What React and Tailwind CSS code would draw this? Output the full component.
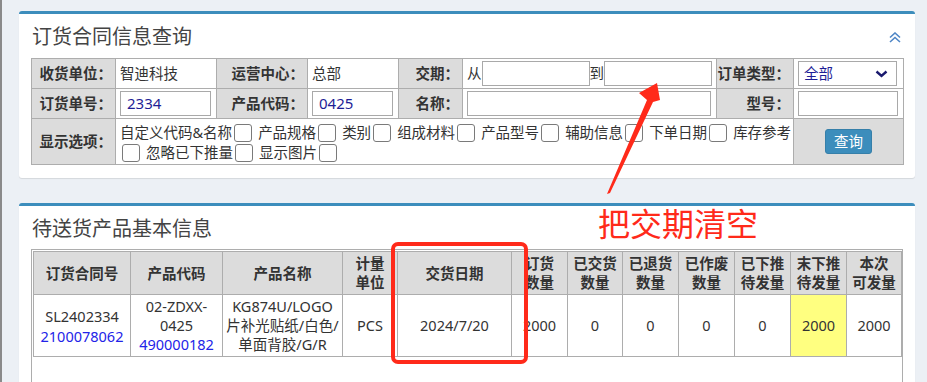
import React from "react";

const Cb = () => (
  <span className="inline-block w-[18px] h-[18px] border border-[#7a7a7a] rounded-[3px] bg-white align-[-4px] ml-[2px] mr-[6px]" />
);

const Label = ({ children, className = "" }) => (
  <td className={`bg-[#dcdcdc] border border-[#adadad] text-right pr-[3px] font-bold text-[#333] whitespace-nowrap ${className}`}>
    {children}
  </td>
);

const Val = ({ children, className = "", ...rest }) => (
  <td className={`border border-[#adadad] bg-white px-[4px] text-[#333] ${className}`} {...rest}>
    {children}
  </td>
);

const Input = ({ w, value }) => (
  <div
    className="h-[25px] border border-[#a9a9a9] bg-white px-[6px] leading-[23px] text-[#1e1e96] text-[15px]"
    style={{ width: w }}
  >
    {value}
  </div>
);

const H = ({ children, className = "" }) => (
  <th className={`border border-[#adadad] bg-[#dcdcdc] font-bold text-[#333] text-center leading-[19px] ${className}`}>
    {children}
  </th>
);

const D = ({ children, className = "" }) => (
  <td className={`border border-[#adadad] text-center text-[#333] leading-[19px] ${className}`}>
    {children}
  </td>
);

export default function App() {
  return (
    <div className="relative w-[927px] h-[382px] overflow-hidden bg-[#ecf0f5] border-l-2 border-[#8a8a8a] font-['Noto_Sans','Noto_Sans_CJK_SC',sans-serif] text-[14.5px]">
      <div className="pl-[17px] pt-[11px] w-[913px]">
        {/* Panel 1 */}
        <div className="w-[896px] bg-white border-t-[3px] border-[#3c8dbc] rounded-[3px] shadow-[0_1px_1px_rgba(0,0,0,0.1)] pb-[13px]">
          <div className="flex items-center justify-between pl-[13px] pr-[14px] pt-[11px] pb-[9px]">
            <div className="text-[20px] leading-[24px] text-[#444]">订货合同信息查询</div>
            <svg width="12" height="11" viewBox="0 0 12 11" fill="none" stroke="#4f86c6" strokeWidth="1.6">
              <polyline points="1,5.5 6,1 11,5.5" />
              <polyline points="1,10 6,5.5 11,10" />
            </svg>
          </div>
          <div className="px-3">
            <table className="w-[872px] table-fixed border-collapse border border-[#adadad]">
              <colgroup>
                <col className="w-[84px]" />
                <col className="w-[101px]" />
                <col className="w-[91px]" />
                <col className="w-[91px]" />
                <col className="w-[64px]" />
                <col className="w-[254px]" />
                <col className="w-[77px]" />
                <col className="w-[110px]" />
              </colgroup>
              <tbody>
                <tr className="h-[30px]">
                  <Label>收货单位：</Label>
                  <Val>智迪科技</Val>
                  <Label>运营中心：</Label>
                  <Val>总部</Val>
                  <Label>交期：</Label>
                  <Val>
                    <div className="flex items-center">
                      <span className="text-[#333]">从</span>
                      <Input w={108} value="" />
                      <span className="text-[#333]">到</span>
                      <Input w={108} value="" />
                    </div>
                  </Val>
                  <Label>订单类型：</Label>
                  <Val>
                    <div className="w-[99px] h-[25px] border border-[#a9a9a9] flex items-center justify-between pl-[5px] pr-[8px] text-[#1e1e96]">
                      <span>全部</span>
                      <svg width="13" height="8" viewBox="0 0 13 8" fill="none" stroke="#1a1a6e" strokeWidth="2.4">
                        <polyline points="1.5,1.5 6.5,6 11.5,1.5" />
                      </svg>
                    </div>
                  </Val>
                </tr>
                <tr className="h-[30px]">
                  <Label>订货单号：</Label>
                  <Val>
                    <Input w={91} value="2334" />
                  </Val>
                  <Label>产品代码：</Label>
                  <Val>
                    <Input w={81} value="0425" />
                  </Val>
                  <Label>名称：</Label>
                  <Val>
                    <Input w={244} value="" />
                  </Val>
                  <Label>型号：</Label>
                  <Val>
                    <Input w={100} value="" />
                  </Val>
                </tr>
                <tr className="h-[46px]">
                  <Label>显示选项：</Label>
                  <Val colSpan={6} className="leading-[20px]">
                    <div className="whitespace-nowrap">
                      自定义代码&amp;名称<Cb />产品规格<Cb />类别<Cb />组成材料<Cb />产品型号<Cb />辅助信息<Cb />下单日期<Cb />库存参考
                      <br />
                      <Cb />忽略已下推量<Cb />显示图片<Cb />
                    </div>
                  </Val>
                  <td className="border border-[#adadad] bg-[#dcdcdc] text-center">
                    <span className="inline-flex items-center justify-center w-[47px] h-[25px] bg-[#3c8dbc] border border-[#367fa9] rounded-[3px] text-white text-[14.5px]">
                      查询
                    </span>
                  </td>
                </tr>
              </tbody>
            </table>
          </div>
        </div>

        {/* Panel 2 */}
        <div className="mt-[25px] w-[896px] h-[220px] bg-white border-t-[3px] border-[#3c8dbc] rounded-[3px] shadow-[0_1px_1px_rgba(0,0,0,0.1)]">
          <div className="pl-[13px] pt-[11px] pb-[8px]">
            <div className="text-[20px] leading-[24px] text-[#444]">待送货产品基本信息</div>
          </div>
          <div className="mx-3 w-[872px] h-[200px] border border-[#adadad] p-px">
            <table className="w-[868px] table-fixed border-collapse">
              <colgroup>
                <col className="w-[97px]" />
                <col className="w-[92px]" />
                <col className="w-[120px]" />
                <col className="w-[55px]" />
                <col className="w-[114px]" />
                <col className="w-[56px]" />
                <col className="w-[55px]" />
                <col className="w-[56px]" />
                <col className="w-[56px]" />
                <col className="w-[56px]" />
                <col className="w-[56px]" />
                <col className="w-[55px]" />
              </colgroup>
              <thead>
                <tr className="h-[43px]">
                  <H>订货合同号</H>
                  <H>产品代码</H>
                  <H>产品名称</H>
                  <H>计量<br />单位</H>
                  <H>交货日期</H>
                  <H>订货<br />数量</H>
                  <H>已交货<br />数量</H>
                  <H>已退货<br />数量</H>
                  <H>已作废<br />数量</H>
                  <H>已下推<br />待发量</H>
                  <H>末下推<br />待发量</H>
                  <H>本次<br />可发量</H>
                </tr>
              </thead>
              <tbody>
                <tr className="h-[62px]">
                  <D className="leading-[20px]">
                    SL2402334
                    <br />
                    <span className="text-[#2323e8]">2100078062</span>
                  </D>
                  <D>
                    02-ZDXX-
                    <br />
                    0425
                    <br />
                    <span className="text-[#2323e8]">490000182</span>
                  </D>
                  <D>
                    KG874U/LOGO
                    <br />
                    片补光贴纸/白色/
                    <br />
                    单面背胶/G/R
                  </D>
                  <D>PCS</D>
                  <D>2024/7/20</D>
                  <D>2000</D>
                  <D>0</D>
                  <D>0</D>
                  <D>0</D>
                  <D>0</D>
                  <D className="bg-[#ffff80]">2000</D>
                  <D>2000</D>
                </tr>
              </tbody>
            </table>
          </div>
        </div>
      </div>

      {/* Annotations */}
      <div className="absolute left-[389px] top-[242px] w-[137px] h-[122px] border-[4px] border-[#ff2a1a] rounded-[7px]" />
      <div className="absolute left-[596px] top-[202px] text-[32px] leading-[40px] text-[#ff2a1a] font-['Noto_Sans_CJK_SC',sans-serif]">
        把交期清空
      </div>
      <svg className="absolute left-0 top-0" width="927" height="382" viewBox="0 0 927 382">
        <polygon
          points="605,194 645,100 637,93 655,83 658,100 651,102 608,193"
          fill="#ff2a1a"
        />
      </svg>
    </div>
  );
}
